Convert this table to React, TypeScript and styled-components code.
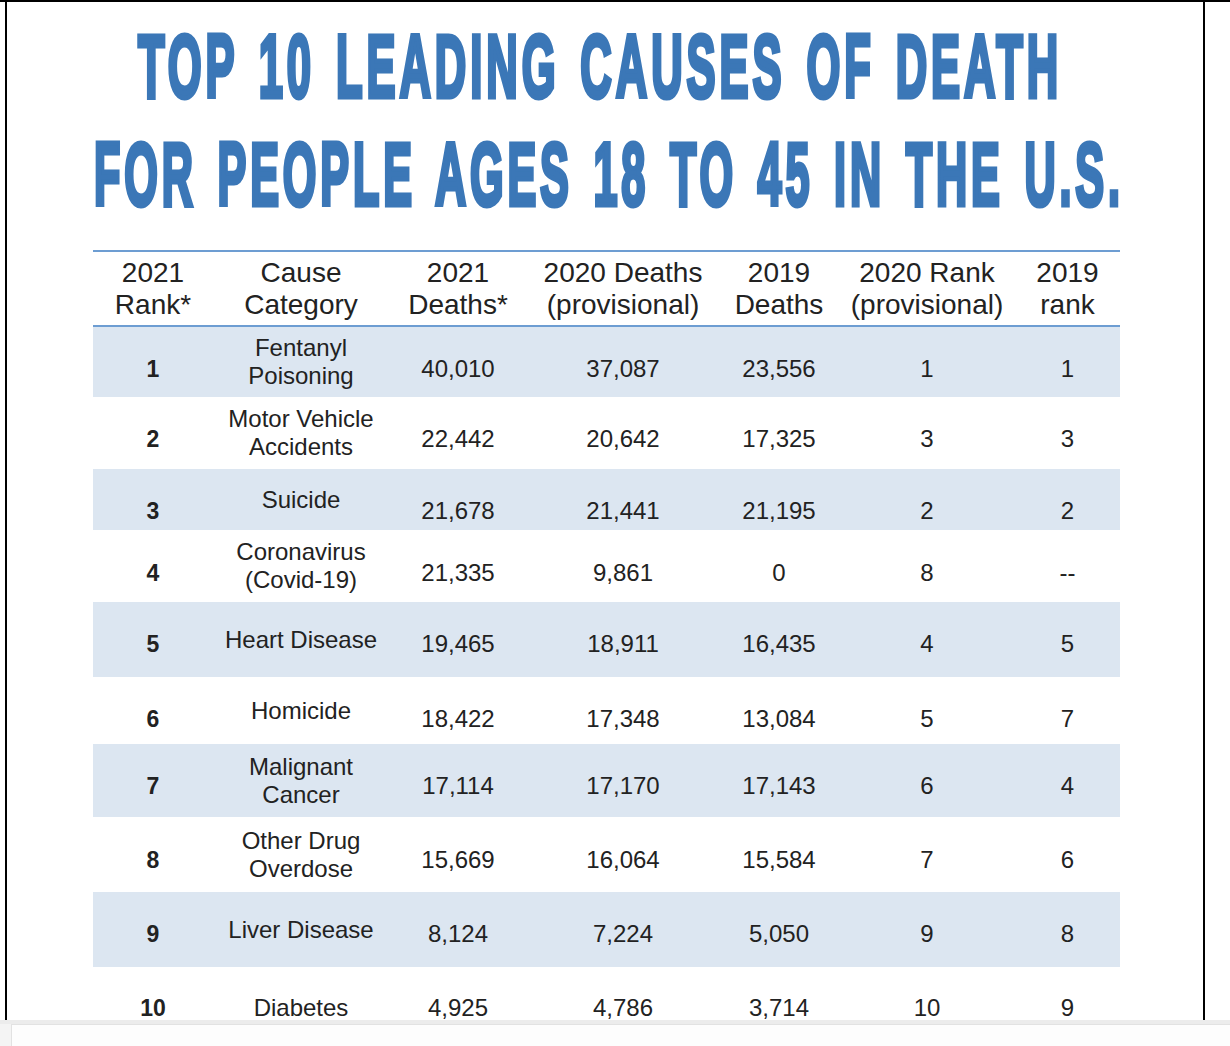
import React, { useLayoutEffect, useRef, useState } from "react";
import styled, { createGlobalStyle } from "styled-components";

const GlobalStyle = createGlobalStyle`
  html, body {
    margin: 0;
    padding: 0;
    background: #fff;
  }
  body {
    font-family: "Liberation Sans", Arial, sans-serif;
    color: #222;
  }
`;

const cols = "120px 176px 138px 192px 120px 176px 105px";
const blue = "#3b77b7";
const rule = "#6d9dd2";

const Page = styled.div`
  width: 1230px;
  height: 1046px;
  display: flex;
  flex-direction: column;
  overflow: hidden;
`;

const Frame = styled.div`
  height: 1020px;
  flex: none;
  box-sizing: border-box;
  border-top: 2px solid #000;
  padding-left: 5px;
  overflow: hidden;
`;

const Sheet = styled.div`
  width: 1200px;
  height: 100%;
  box-sizing: border-box;
  border-left: 2px solid #000;
  border-right: 2px solid #000;
  padding-top: 10px;
`;

const TitleLine = styled.div<{ $left: number }>`
  height: 108px;
  line-height: 108px;
  padding-left: ${p => p.$left}px;
  white-space: nowrap;
`;

const TitleText = styled.span`
  display: inline-block;
  font-family: "Liberation Sans", Arial, sans-serif;
  font-weight: 700;
  font-size: 89px;
  letter-spacing: 8px;
  word-spacing: 10px;
  color: ${blue};
  -webkit-text-stroke: 5px ${blue};
  transform-origin: left center;
`;

const Table = styled.div`
  margin: 22px 0 0 86px;
  width: 1027px;
`;

const HeadRow = styled.div`
  display: grid;
  grid-template-columns: ${cols};
  align-items: center;
  height: 77px;
  box-sizing: border-box;
  border-top: 2px solid ${rule};
  border-bottom: 2px solid ${rule};
`;

const HeadCell = styled.div`
  text-align: center;
  font-size: 28px;
  line-height: 32px;
  white-space: nowrap;
  color: #222;
`;

const Row = styled.div<{ $h: number; $band: boolean }>`
  display: grid;
  grid-template-columns: ${cols};
  height: ${p => p.$h}px;
  background: ${p => (p.$band ? "#dce6f1" : "#fff")};
`;

const Cell = styled.div<{ $shift?: number; $bold?: boolean }>`
  display: flex;
  align-items: center;
  justify-content: center;
  text-align: center;
  box-sizing: border-box;
  padding-top: ${p => (p.$shift ?? 0) * 2}px;
  font-size: ${p => (p.$bold ? 23 : 24)}px;
  font-weight: ${p => (p.$bold ? 700 : 400)};
  line-height: 28px;
  color: #222;
`;

const BottomBar = styled.div`
  flex: 1;
  display: flex;
  background: #f4f4f4;
  border-top: 4px solid #ececec;
  padding-left: 11px;
`;

const BottomField = styled.div`
  flex: 1;
  background: #fdfdfd;
  border-top: 1px solid #e2e2e2;
  border-left: 1px solid #e2e2e2;
`;

const heads = [
  ["2021", "Rank*"],
  ["Cause", "Category"],
  ["2021", "Deaths*"],
  ["2020 Deaths", "(provisional)"],
  ["2019", "Deaths"],
  ["2020 Rank", "(provisional)"],
  ["2019", "rank"],
];

const rows = [
  { h: 70, s: 7, cause: ["Fentanyl", "Poisoning"], v: ["40,010", "37,087", "23,556", "1", "1"] },
  { h: 72, s: 6, cause: ["Motor Vehicle", "Accidents"], v: ["22,442", "20,642", "17,325", "3", "3"] },
  { h: 61, s: 11, cause: ["Suicide"], v: ["21,678", "21,441", "21,195", "2", "2"] },
  { h: 72, s: 7, cause: ["Coronavirus", "(Covid-19)"], v: ["21,335", "9,861", "0", "8", "--"] },
  { h: 75, s: 4, cause: ["Heart Disease"], v: ["19,465", "18,911", "16,435", "4", "5"] },
  { h: 67, s: 8, cause: ["Homicide"], v: ["18,422", "17,348", "13,084", "5", "7"] },
  { h: 73, s: 5, cause: ["Malignant", "Cancer"], v: ["17,114", "17,170", "17,143", "6", "4"] },
  { h: 75, s: 5, cause: ["Other Drug", "Overdose"], v: ["15,669", "16,064", "15,584", "7", "6"] },
  { h: 75, s: 4, cause: ["Liver Disease"], v: ["8,124", "7,224", "5,050", "9", "8"] },
  { h: 82, s: 0, cause: ["Diabetes"], v: ["4,925", "4,786", "3,714", "10", "9"] },
];

// the title face is a heavy condensed one: squeeze a bold sans to the width it takes
function TitleRow({ text, left, width }: { text: string; left: number; width: number }) {
  const ref = useRef<HTMLSpanElement>(null);
  const [scale, setScale] = useState(1);
  useLayoutEffect(() => {
    if (ref.current) setScale(width / ref.current.offsetWidth);
  }, [width]);
  return (
    <TitleLine $left={left}>
      <TitleText ref={ref} style={{ transform: `scaleX(${scale})` }}>
        {text}
      </TitleText>
    </TitleLine>
  );
}

function Lines({ parts }: { parts: string[] }) {
  return (
    <div>
      {parts.map(p => (
        <div key={p}>{p}</div>
      ))}
    </div>
  );
}

export default function App() {
  return (
    <Page>
      <GlobalStyle />
      <Frame>
        <Sheet>
          <TitleRow text="TOP 10 LEADING CAUSES OF DEATH" left={131} width={924} />
          <TitleRow text="FOR PEOPLE AGES 18 TO 45 IN THE U.S." left={87} width={1030} />
          <Table>
            <HeadRow>
              {heads.map(h => (
                <HeadCell key={h.join()}>
                  <Lines parts={h} />
                </HeadCell>
              ))}
            </HeadRow>
            {rows.map((r, i) => (
              <Row key={r.cause[0]} $h={r.h} $band={i % 2 === 0}>
                <Cell $shift={r.s} $bold>{i + 1}</Cell>
                <Cell>
                  <Lines parts={r.cause} />
                </Cell>
                {r.v.map((v, j) => (
                  <Cell key={j} $shift={r.s}>{v}</Cell>
                ))}
              </Row>
            ))}
          </Table>
        </Sheet>
      </Frame>
      <BottomBar>
        <BottomField />
      </BottomBar>
    </Page>
  );
}
